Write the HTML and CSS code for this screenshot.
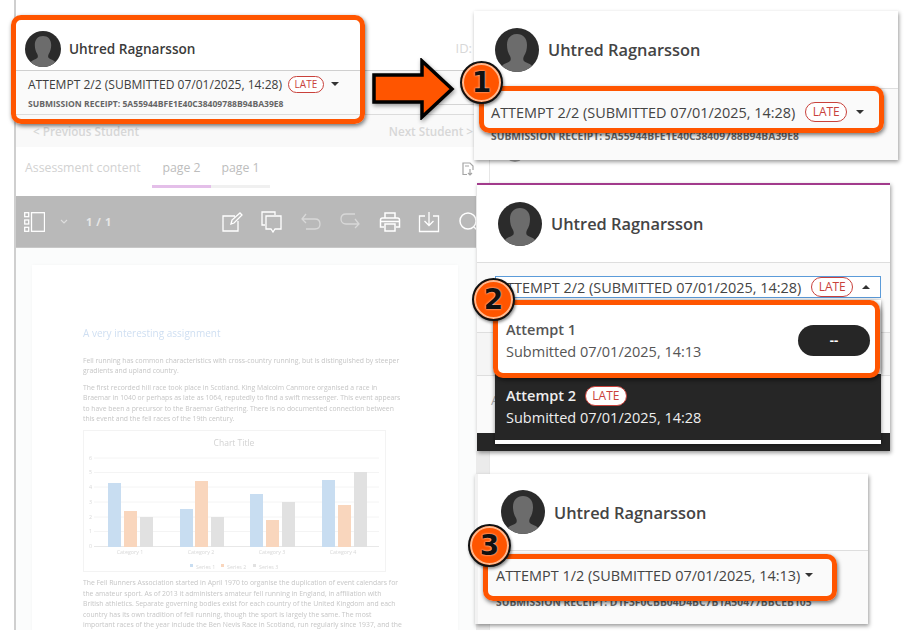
FILE: index.html
```html
<!DOCTYPE html>
<html lang="en">
<head>
<meta charset="UTF-8">
<meta name="viewport" content="width=device-width,initial-scale=1">
<title>Attempt selector</title>
<link rel="stylesheet" href="styles.css">
</head>
<body>
<svg class="defs" width="0" height="0">
  <symbol id="avatar" viewBox="0 0 44 44">
    <clipPath id="round"><circle cx="22" cy="22" r="22"/></clipPath>
    <circle cx="22" cy="22" r="22" fill="#2b2b2b"/>
    <path clip-path="url(#round)" fill="#6c6c6c" d="M22 6c-6 0-10 4-10 11 0 4 1 8 3 11 1 2 1 4 0 5-2 2-6 2-8 5l-1 6h32l-1-6c-2-3-6-3-8-5-1-1-1-3 0-5 2-3 3-7 3-11 0-7-4-11-10-11z"/>
  </symbol>
</svg>

<div class="canvas">
  <!-- screenshot of the whole page, faded behind the callouts -->
  <div class="app">
    <div class="app-head">
      <svg class="avatar-sm"><use href="#avatar"/></svg>
      <span class="name-sm">Uhtred Ragnarsson</span>
      <span class="id-label">ID:</span>
    </div>
    <div class="app-attempt">
      <div class="attempt-main">
        <div class="attempt-row-sm">ATTEMPT 2/2 (SUBMITTED 07/01/2025, 14:28) <span class="late late-sm">LATE</span><span class="caret caret-sm"></span></div>
        <div class="receipt-sm">SUBMISSION RECEIPT: 5A55944BFE1E40C38409788B94BA39E8</div>
      </div>
      <div class="attempt-side"></div>
    </div>
    <div class="student-nav"><span>&lt; Previous Student</span><span>Next Student &gt;</span></div>
    <div class="tabs">
      <span class="tab-label">Assessment content</span>
      <span class="tab tab-on">page 2</span>
      <span class="tab">page 1</span>
      <svg class="tab-icon" viewBox="0 0 12 14" fill="none" stroke="#a5a5a5" stroke-width="1.2"><path d="M5 12.5H1V1h7l3 3v4M3 4h4M8 7v6M6 11l2 2 2-2"/></svg>
    </div>
    <div class="toolbar">
      <svg class="tool-side" viewBox="0 0 21 20" fill="none" stroke="#fff" stroke-width="1.3"><rect x="7.5" y=".7" width="13" height="18.6"/><rect x=".7" y=".7" width="4" height="4"/><rect x=".7" y="8" width="4" height="4"/><rect x=".7" y="15.3" width="4" height="4"/></svg>
      <svg class="tool-chev" viewBox="0 0 8 5" fill="none" stroke="#dedede" stroke-width="1.1"><path d="M1 1l3 3 3-3"/></svg>
      <span class="pages">1 / 1</span>
      <div class="tools">
        <svg viewBox="0 0 22 22" fill="none" stroke="#fff" stroke-width="1.3"><path d="M14 5H2v15h15V10M10 13l1-4 8-7 2 2-8 8z"/></svg>
        <svg viewBox="0 0 22 22" fill="none" stroke="#fff" stroke-width="1.3"><path d="M15 4V1H2v13h3M6 5h15v13h-6l-2 3-2-3H6z"/></svg>
        <svg class="off" viewBox="0 0 22 22" fill="none" stroke="#d8d8d8" stroke-width="1.3"><path d="M6 3L2 8l4 4M2 8h13c3 0 5 2 5 5s-2 5-5 5H6"/></svg>
        <svg class="off" viewBox="0 0 22 22" fill="none" stroke="#d8d8d8" stroke-width="1.3"><path d="M16 8l4 5-4 4M20 13H7c-3 0-5-2-5-5s2-5 5-5h9"/></svg>
        <svg viewBox="0 0 22 22" fill="none" stroke="#fff" stroke-width="1.5"><path d="M6 7V2h10v5M5 16H1.500V9c0-1 1-2 2-2h15c1 0 2 1 2 2v7H17"/><rect x="6" y="13" width="10" height="7"/><path d="M2 10.500h18"/></svg>
        <svg viewBox="0 0 22 22" fill="none" stroke="#fff" stroke-width="1.3"><path d="M7 5H1.500v15.500h19V5H15M11 1v13M6.500 10l4.500 4.500 4.500-4.500"/></svg>
        <svg viewBox="0 0 22 22" fill="none" stroke="#fff" stroke-width="1.5"><circle cx="10" cy="10" r="8"/><path d="M16 16l5 5"/></svg>
      </div>
    </div>
    <div class="viewer">
      <div class="sheet">
        <h1 class="doc-title">A very interesting assignment</h1>
        <p class="doc-text">Fell running has common characteristics with cross-country running, but is distinguished by steeper<br>gradients and upland country.</p>
        <p class="doc-text">The first recorded hill race took place in Scotland. King Malcolm Canmore organised a race in<br>Braemar in 1040 or perhaps as late as 1064, reputedly to find a swift messenger. This event appears<br>to have been a precursor to the Braemar Gathering. There is no documented connection between<br>this event and the fell races of the 19th century.</p>
        <svg class="chart" viewBox="0 0 303 142">
          <text x="151" y="16" class="chart-title" text-anchor="middle">Chart Title</text>
          <g stroke="#f4f4f4">
            <path d="M11 28h285M11 42.500h285M11 57h285M11 72h285M11 87h285M11 101.500h285"/>
            <path d="M11 116.500h285" stroke="#e8e8e8"/>
          </g>
          <g class="chart-label" text-anchor="end">
            <text x="9" y="30">6</text><text x="9" y="44">5</text><text x="9" y="59">4</text><text x="9" y="74">3</text><text x="9" y="89">2</text><text x="9" y="103">1</text><text x="9" y="118">0</text>
          </g>
          <g fill="#c8ddf1">
            <rect x="25" y="53" width="13" height="64"/><rect x="97" y="79" width="13" height="38"/><rect x="167" y="64" width="13" height="53"/><rect x="239" y="50" width="13" height="67"/>
          </g>
          <g fill="#f9d6bd">
            <rect x="41" y="81" width="13" height="36"/><rect x="112" y="51" width="13" height="66"/><rect x="183" y="90" width="13" height="27"/><rect x="255" y="75" width="13" height="42"/>
          </g>
          <g fill="#e1e1e1">
            <rect x="57" y="87" width="13" height="30"/><rect x="128" y="87" width="13" height="30"/><rect x="199" y="72" width="13" height="45"/><rect x="271" y="42" width="13" height="75"/>
          </g>
          <g class="chart-label" text-anchor="middle">
            <text x="47" y="124">Category 1</text><text x="118" y="124">Category 2</text><text x="189" y="124">Category 3</text><text x="260" y="124">Category 4</text>
          </g>
          <g class="chart-label">
            <rect x="107" y="134" width="3" height="3" fill="#c8ddf1"/><text x="113" y="139">Series 1</text>
            <rect x="138" y="134" width="3" height="3" fill="#f9d6bd"/><text x="144" y="139">Series 2</text>
            <rect x="170" y="134" width="3" height="3" fill="#e1e1e1"/><text x="176" y="139">Series 3</text>
          </g>
        </svg>
        <p class="doc-text doc-last">The Fell Runners Association started in April 1970 to organise the duplication of event calendars for<br>the amateur sport. As of 2013 it administers amateur fell running in England, in affiliation with<br>British athletics. Separate governing bodies exist for each country of the United Kingdom and each<br>country has its own tradition of fell running, though the sport is largely the same. The most<br>important races of the year include the Ben Nevis Race in Scotland, run regularly since 1937, and the</p>
      </div>
    </div>
  </div>
  <div class="strip"></div>
  <div class="peek"></div>

  <!-- crop 1 -->
  <section class="panel panel-one">
    <div class="panel-head">
      <svg class="avatar"><use href="#avatar"/></svg>
      <span class="name">Uhtred Ragnarsson</span>
    </div>
    <div class="panel-body">
      <div class="attempt-row">ATTEMPT 2/2 (SUBMITTED 07/01/2025, 14:28) <span class="late">LATE</span><span class="caret"></span></div>
      <div class="receipt">SUBMISSION RECEIPT: 5A55944BFE1E40C38409788B94BA39E8</div>
    </div>
  </section>

  <!-- crop 2, menu open -->
  <section class="panel panel-two">
    <div class="panel-head">
      <svg class="avatar"><use href="#avatar"/></svg>
      <span class="name">Uhtred Ragnarsson</span>
    </div>
    <div class="panel-body">
      <div class="attempt-row select-open">ATTEMPT 2/2 (SUBMITTED 07/01/2025, 14:28) <span class="late">LATE</span><span class="caret caret-up"></span></div>
      <div class="behind-a"></div>
      <div class="behind-b">A</div>
      <div class="dark-bar"></div>
    </div>
    <div class="menu">
      <div class="menu-item">
        <div class="menu-text">
          <div class="menu-title">Attempt 1</div>
          <div>Submitted 07/01/2025, 14:13</div>
        </div>
        <span class="grade">--</span>
      </div>
      <div class="menu-item menu-item-on">
        <div class="menu-text">
          <div class="menu-title">Attempt 2 <span class="late late-on">LATE</span></div>
          <div>Submitted 07/01/2025, 14:28</div>
        </div>
      </div>
    </div>
  </section>

  <!-- crop 3 -->
  <section class="panel panel-three">
    <div class="panel-head">
      <svg class="avatar"><use href="#avatar"/></svg>
      <span class="name">Uhtred Ragnarsson</span>
    </div>
    <div class="panel-body">
      <div class="attempt-row">ATTEMPT 1/2 (SUBMITTED 07/01/2025, 14:13)<span class="caret caret-tight"></span></div>
      <div class="receipt">SUBMISSION RECEIPT: D1F3F0CBB04D4BC7B1A50477BBCEB105</div>
    </div>
  </section>

  <!-- callouts -->
  <div class="hl hl-a"></div>
  <div class="hl hl-b"></div>
  <div class="hl hl-c"></div>
  <div class="hl hl-d"></div>
  <svg class="arrow" viewBox="0 0 84 62"><path d="M2 17h48V3l30 28-30 28V44H2z" fill="#ff5500" stroke="#000" stroke-width="3.500" stroke-linejoin="miter"/></svg>
  <div class="num num-1">1</div>
  <div class="num num-2">2</div>
  <div class="num num-3">3</div>
</div>
</body>
</html>
```

FILE: styles.css
```css
body{margin:0;background:#fff;font-family:"Open Sans",sans-serif;color:#444;}
.defs{display:block;}
.canvas{position:relative;width:907px;height:638px;overflow:hidden;}

/* faded page */
.app{position:absolute;left:14px;top:0;width:462px;height:630px;border-left:2px solid #cfcfcf;box-sizing:border-box;display:flex;flex-direction:column;background:#fff;overflow:hidden;}
.app-head{height:71px;flex:none;box-sizing:border-box;display:flex;align-items:center;padding:26px 0 0 9px;border-bottom:1px solid #cfcfcf;}
.avatar-sm{width:36px;height:36px;margin-top:1px;}
.name-sm{margin-left:8px;font-size:13.600px;font-weight:600;color:#3b3b3b;}
.id-label{margin-left:auto;margin-right:4px;font-size:13px;color:#d8d8d8;}
.app-attempt{height:44px;flex:none;box-sizing:border-box;display:flex;background:#fafafa;border-bottom:1px solid #dcdcdc;}
.attempt-main{flex:1;padding:3px 0 0 12px;}
.attempt-row-sm{display:flex;align-items:center;font-size:12.050px;color:#3d3d3d;white-space:pre;height:20px;}
.receipt-sm{margin-top:5px;font-size:8.550px;font-weight:700;color:#666;line-height:10px;white-space:nowrap;}
.attempt-side{width:46px;height:33px;border-bottom:1px solid #d4d4d4;}
.student-nav{height:32px;flex:none;display:flex;justify-content:space-between;align-items:center;padding:0 3px 0 17px;background:#f9f9f9;font-size:11.700px;font-weight:600;color:#d7d7d7;}
.tabs{height:49px;flex:none;display:flex;align-items:flex-start;font-size:12.300px;color:#c9c9c9;position:relative;}
.tab-label{margin:12px 0 0 9px;width:127px;font-weight:400;color:#d2d2d2;}
.tab{width:59px;height:41px;box-sizing:border-box;padding-top:12px;text-align:center;border-bottom:3px solid #f0f0f0;color:#bdbdbd;}
.tab-on{border-bottom-color:#e4bfe9;}
.tab-icon{position:absolute;left:446px;top:15px;width:12px;height:14px;}
.toolbar{height:52px;flex:none;box-sizing:border-box;display:flex;align-items:center;padding-left:8px;background:#b9b9b9;border-bottom:1px solid #c8c8c8;}
.tool-side{width:21px;height:20px;flex:none;}
.tool-chev{width:8px;height:5px;margin-left:15px;flex:none;}
.pages{margin-left:18px;font-size:11px;font-weight:700;color:#e6e6e6;letter-spacing:.6px;white-space:nowrap;}
.tools{display:flex;gap:17.500px;margin-left:109px;flex:none;}
.tools svg{width:22px;height:22px;display:block;}
.viewer{flex:1;background:#fbfcfc;padding:17px 18px 0 16px;}
.sheet{height:400px;background:#fff;padding:62px 0 0 51px;filter:blur(.35px);box-shadow:0 0 3px rgba(0,0,0,.03);}
.doc-title{margin:0 0 16px;font-size:10px;font-weight:400;line-height:13px;color:#cfdff2;}
.doc-text{margin:0 0 6px;font-size:6.830px;line-height:10.400px;color:#c6c6c6;white-space:nowrap;}
.chart{display:block;width:303px;height:142px;outline:1px solid #f3f3f3;outline-offset:-1px;}
.chart-title{font:8.500px "Open Sans",sans-serif;fill:#d2d2d2;}
.chart-label{font:5.300px "Open Sans",sans-serif;fill:#d8d8d8;}
.doc-last{margin-top:6px;}

.strip{position:absolute;left:476px;top:160px;width:13px;height:470px;border-right:1px solid #e6e6e6;background:linear-gradient(#fff 291px,#ebebeb 291px);}
.peek{position:absolute;left:505px;top:142px;width:20px;height:20px;border-radius:50%;background:#a8a8a8;}

/* cropped panels */
.panel{position:absolute;background:#fff;box-shadow:1px 2px 4px rgba(0,0,0,.4);box-sizing:border-box;display:flex;flex-direction:column;}
.panel-one{left:474px;top:11px;width:424px;height:149px;}
.panel-two{left:477px;top:183px;width:413px;height:268px;border-top:2px solid #a23b8c;}
.panel-three{left:475px;top:474px;width:393px;height:150px;border-left:3px solid #f2f2f2;}
.panel-head{display:flex;align-items:center;height:78px;flex:none;box-sizing:border-box;padding-left:21px;border-bottom:1px solid #dedede;}
.panel-three .panel-head{height:77px;padding-left:23px;}
.avatar{width:44px;height:44px;flex:none;}
.name{margin-left:9px;font-size:16.400px;font-weight:600;color:#444;}
.panel-body{flex:1;background:#fafafa;display:flex;flex-direction:column;padding:13px 0 0 17px;min-height:0;}
.attempt-row{display:flex;align-items:center;height:20px;font-size:14.450px;color:#444;white-space:pre;}
.receipt{margin-top:8px;font-size:10.300px;font-weight:700;line-height:12px;color:#666;white-space:nowrap;}
.panel-three .panel-body{padding:14px 0 0 18px;}
.panel-three .receipt{margin-top:11px;}

.late{display:inline-block;box-sizing:border-box;height:20px;line-height:18px;padding:0 6.500px;margin-left:6px;border:1px solid #c9413b;border-radius:10px;font-size:12px;color:#c9413b;background:#fff;}
.late-sm{height:17px;line-height:15px;padding:0 5.500px;font-size:10px;margin-left:3px;}
.caret{width:0;height:0;margin-left:9px;border:4px solid transparent;border-top:4px solid #333;border-bottom:0;}
.caret-sm{margin-left:7px;}
.caret-tight{margin-left:5px;}
.caret-up{border-top:0;border-bottom:4px solid #333;}

.select-open{margin:0 0 0 1px;width:386px;box-sizing:border-box;height:22px;border:1px solid #5b9bd9;padding-left:1px;background:#fff;}
.behind-a{margin:34px 0 0 -17px;height:42px;border-top:1px solid #dedede;border-bottom:1px solid #dedede;flex:none;background:#f5f5f5;}
.behind-b{margin:15px 0 0 -3px;font-size:13px;color:#aaa;}
.dark-bar{margin:auto 0 0 -17px;height:18px;background:#262626;flex:none;}

.menu{position:absolute;left:18px;top:115px;width:386px;height:144px;box-sizing:border-box;padding:7px 0 4px;background:#fff;box-shadow:0 1px 4px rgba(0,0,0,.45);font-size:14.500px;}
.menu-item{height:67px;box-sizing:border-box;display:flex;align-items:center;justify-content:space-between;padding:0 11px;background:#fff;color:#555;}
.menu-item-on{height:66px;background:#262626;color:#eee;}
.menu-text{line-height:22px;}
.menu-title{font-weight:600;display:flex;align-items:center;white-space:pre;}
.late-on{margin-left:5px;font-weight:400;}
.grade{width:72px;height:31px;line-height:30px;border-radius:16px;background:#262626;color:#fff;text-align:center;font-weight:700;font-size:13px;}

/* annotation layer */
.hl{position:absolute;box-sizing:border-box;border:5px solid #ff5500;border-radius:10px;box-shadow:1px 2px 4px rgba(0,0,0,.55);}
.hl-a{left:11px;top:15px;width:354px;height:109px;}
.hl-b{left:479px;top:86px;width:405px;height:47px;}
.hl-c{left:493px;top:300px;width:387px;height:78px;}
.hl-d{left:483px;top:554px;width:354px;height:47px;}
.arrow{position:absolute;left:372px;top:58px;width:84px;height:62px;filter:drop-shadow(1px 2px 2px rgba(0,0,0,.4));}
.num{position:absolute;box-sizing:border-box;width:43px;height:43px;display:flex;align-items:center;justify-content:center;border:2px solid #111;border-radius:50%;background:#ff5500;box-shadow:inset 0 0 0 2px #ffb98f,1px 2px 3px rgba(0,0,0,.45);font-family:"DejaVu Sans",sans-serif;font-size:28px;font-weight:700;color:#111;text-shadow:0 0 2px #fff;}
.num-1{left:460px;top:61px;}
.num-2{left:472px;top:278px;}
.num-3{left:468px;top:524px;}
```
